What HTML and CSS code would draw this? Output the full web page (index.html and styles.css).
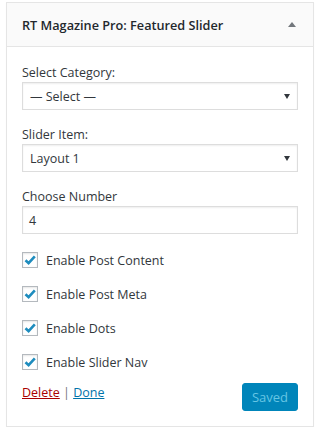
FILE: index.html
```html
<!DOCTYPE html>
<html lang="en">
<head>
  <meta charset="UTF-8">
  <meta name="viewport" content="width=device-width, initial-scale=1">
  <title>RT Magazine Pro: Featured Slider</title>

  <link rel="stylesheet" href="styles.css">
</head>
<body>
<div class="Widget">
  <div class="Widget__Top">
    <div class="Widget__Title">RT Magazine Pro: Featured Slider</div>
    <svg class="Widget__Toggle" width="8" height="5" viewBox="0 0 8 5"><path d="M4 0 L8 5 L0 5 Z" fill="#72777c"/></svg>
  </div>
  <div class="Widget__Content">
    <div class="Field">
      <div class="Field__Label">Select Category:</div>
      <div class="Select">
        <span>— Select —</span>
        <svg width="6" height="5" viewBox="0 0 6 5"><path d="M0 0 L6 0 L3 5 Z" fill="#32373c"/></svg>
      </div>
    </div>
    <div class="Field">
      <div class="Field__Label">Slider Item:</div>
      <div class="Select">
        <span>Layout 1</span>
        <svg width="6" height="5" viewBox="0 0 6 5"><path d="M0 0 L6 0 L3 5 Z" fill="#32373c"/></svg>
      </div>
    </div>
    <div class="Field">
      <div class="Field__Label">Choose Number</div>
      <div class="Input">4</div>
    </div>

    <div class="Checks">
      <div class="Check">
        <span class="Check__Box"><svg width="14" height="14" viewBox="0 0 14 14"><path d="M2.5 7.2 L5.6 10.2 L11.8 3.4" fill="none" stroke="#1e8cbe" stroke-width="2.6"/></svg></span>
        <span>Enable Post Content</span>
      </div>
      <div class="Check">
        <span class="Check__Box"><svg width="14" height="14" viewBox="0 0 14 14"><path d="M2.5 7.2 L5.6 10.2 L11.8 3.4" fill="none" stroke="#1e8cbe" stroke-width="2.6"/></svg></span>
        <span>Enable Post Meta</span>
      </div>
      <div class="Check">
        <span class="Check__Box"><svg width="14" height="14" viewBox="0 0 14 14"><path d="M2.5 7.2 L5.6 10.2 L11.8 3.4" fill="none" stroke="#1e8cbe" stroke-width="2.6"/></svg></span>
        <span>Enable Dots</span>
      </div>
      <div class="Check">
        <span class="Check__Box"><svg width="14" height="14" viewBox="0 0 14 14"><path d="M2.5 7.2 L5.6 10.2 L11.8 3.4" fill="none" stroke="#1e8cbe" stroke-width="2.6"/></svg></span>
        <span>Enable Slider Nav</span>
      </div>
    </div>

    <div class="Widget__Footer">
      <div class="Widget__Links">
        <a class="Link__Delete" href="#">Delete</a> <span class="Link__Sep">|</span> <a class="Link__Done" href="#">Done</a>
      </div>
      <button class="Button" disabled>Saved</button>
    </div>
  </div>
</div>
</body>
</html>
```

FILE: styles.css
```css
html, body {
  margin: 0;
  padding: 0;
  background: #ffffff;
}

body {
  padding: 2px 8px 0 6px;
  font-family: "Open Sans", "Noto Sans", Arial, sans-serif;
  font-size: 12.5px;
  color: #32373c;
}

.Widget {
  border: 1px solid #e5e5e5;
  box-shadow: 0 1px 1px rgba(0, 0, 0, 0.04);
  background: #ffffff;
}

.Widget__Top {
  display: flex;
  align-items: center;
  justify-content: space-between;
  height: 43px;
  padding: 0 17px 0 15px;
  background: #fafafa;
  border-bottom: 1px solid #e5e5e5;
}

.Widget__Title {
  font-size: 12.7px;
  font-weight: 600;
  color: #23282d;
}

.Widget__Content {
  padding: 17px 15px 15px;
}

.Field {
  margin-bottom: 16px;
}

.Field__Label {
  line-height: 18px;
}

.Select,
.Input {
  display: flex;
  align-items: center;
  justify-content: space-between;
  height: 26px;
  padding: 0 7px 0 7px;
  border: 1px solid #dddddd;
  box-shadow: inset 0 1px 2px rgba(0, 0, 0, 0.07);
  color: #32373c;
}

.Input {
  padding-left: 6px;
}

.Checks {
  padding-top: 2px;
}

.Check {
  display: flex;
  align-items: center;
  gap: 8px;
  height: 16px;
  margin-bottom: 18px;
}

.Check:last-child {
  margin-bottom: 13px;
}

.Check__Box {
  display: flex;
  align-items: center;
  justify-content: center;
  width: 14px;
  height: 14px;
  border: 1px solid #b4b9be;
  box-shadow: inset 0 1px 2px rgba(0, 0, 0, 0.1);
}

.Widget__Footer {
  display: flex;
  justify-content: space-between;
  align-items: flex-start;
}

.Widget__Links {
  line-height: 20px;
}

.Link__Delete {
  color: #aa0000;
}

.Link__Sep {
  color: #72777c;
}

.Link__Done {
  color: #0073aa;
}

.Button {
  width: 56px;
  height: 28px;
  padding: 0;
  border: 1px solid #0085ba;
  border-radius: 3px;
  background: #0085ba;
  color: #66c6e4;
  font-family: inherit;
  font-size: 13px;
}
```
